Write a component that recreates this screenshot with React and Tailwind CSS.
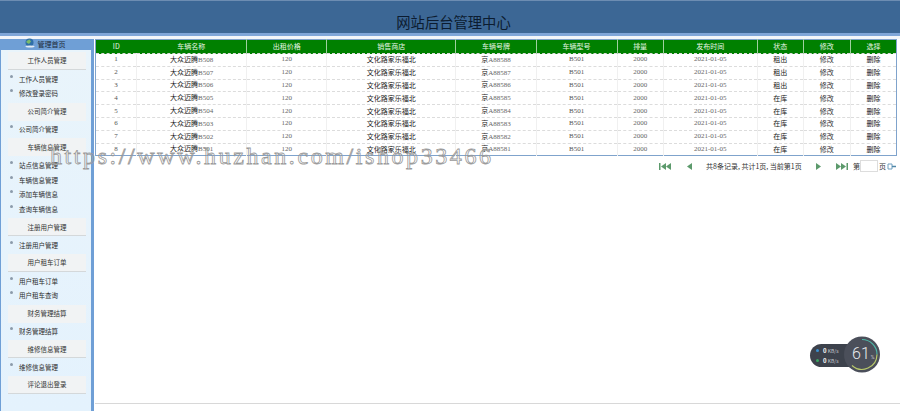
const cols = [41, 110, 80, 129, 80, 81, 46, 94, 46, 47, 46]
const heads = ['ID', '车辆名称', '出租价格', '销售商店', '车辆号牌', '车辆型号', '排量', '发布时间', '状态', '修改', '选择']

const rows = [8, 7, 6, 5, 4, 3, 2, 1].map((n, i) => ({
  id: i + 1,
  name: 'B50' + n,
  plate: 'A8858' + n,
  status: i < 3 ? '租出' : '在库',
}))

const menu = [
  { title: '工作人员管理', line: true, items: ['工作人员管理', '修改登录密码'] },
  { title: '公司简介管理', items: ['公司简介管理'] },
  { title: '车辆信息管理', items: ['站点信息管理', '车辆信息管理', '添加车辆信息', '查询车辆信息'] },
  { title: '注册用户管理', line: true, items: ['注册用户管理'] },
  { title: '用户租车订单', line: true, items: ['用户租车订单', '用户租车查询'] },
  { title: '财务管理结算', items: ['财务管理结算'] },
  { title: '维修信息管理', line: true, items: ['维修信息管理'] },
  { title: '评论退出登录', line: true, items: [] },
]

function Sidebar() {
  return (
    <aside className="flex w-[94px] shrink-0 flex-col border-l border-l-[#6f9fd6] border-r-[3px] border-r-[#6f9fd6]">
      <div className="flex h-[11px] items-center justify-center gap-[3px] bg-[#6f9fd6] pr-[3px]">
        <svg width="11" height="10" viewBox="0 0 11 10" className="-mt-[4px]">
          <circle cx="5.5" cy="4.5" r="4" fill="#2f6fa8" />
          <path d="M2.5 3 5.5 1.5 7 3.5 5 6 2.5 4.500z" fill="#7dbb6a" />
          <ellipse cx="6" cy="8.500" rx="4.500" ry="1" fill="#e4ecf4" />
        </svg>
        <span className="text-[7px] leading-none text-[#1d2a3a]">管理首页</span>
      </div>
      <nav className="flex-1 bg-gradient-to-b from-[#e9f4fb] to-[#e4f2fd] pt-[2px]">
        {menu.map((group) => (
          <div key={group.title}>
            <div
              className={
                'ml-[7px] mr-[5px] flex h-[18px] items-center justify-center bg-[#f1f3f4] text-[6.5px] leading-none text-[#333] ' +
                (group.line ? 'border-b border-[#d4d8da]' : '')
              }
            >
              {group.title}
            </div>
            {group.items.length > 0 && (
              <ul className="py-[1.5px]">
                {group.items.map((item) => (
                  <li key={item} className="relative flex h-[14.75px] items-center pl-[18px] text-[6.5px] leading-none text-[#2c2c2c]">
                    <span className="absolute left-[9px] top-[3px] h-[3px] w-[3px] rounded-full bg-[#8c9bab]" />
                    {item}
                  </li>
                ))}
              </ul>
            )}
          </div>
        ))}
      </nav>
    </aside>
  )
}

function DataTable() {
  return (
    <table className="w-[802px] table-fixed border-collapse border border-[#7fa3cc] text-center text-[7px] leading-none text-[#333]">
      <colgroup>
        {cols.map((w, i) => (
          <col key={i} style={{ width: w }} />
        ))}
      </colgroup>
      <thead>
        <tr className="h-[14px] bg-[#008000] text-[#e6f5e6]">
          {heads.map((h, i) => (
            <th key={h} className={'p-0 font-normal ' + (i > 1 ? 'border-l border-[#9fd09f]' : '')}>
              {h}
            </th>
          ))}
        </tr>
      </thead>
      <tbody>
        {rows.map((r) => (
          <tr key={r.id} className="h-[12.8px] border-t border-dashed border-[#dcdcdc]">
            <td className="p-0 font-['Liberation_Serif'] text-[#555]">{r.id}</td>
            <td className="border-l border-[#f0f0f0] p-0 text-[#222]">
              大众迈腾<span className="font-['Liberation_Serif'] text-[#666]">{r.name}</span>
            </td>
            <td className="border-l border-[#f0f0f0] p-0 font-['Liberation_Serif'] text-[#666]">120</td>
            <td className="border-l border-[#f0f0f0] p-0 text-[#222]">文化路家乐福北</td>
            <td className="border-l border-[#f0f0f0] p-0 text-[#222]">
              京<span className="font-['Liberation_Serif'] text-[#666]">{r.plate}</span>
            </td>
            <td className="border-l border-[#f0f0f0] p-0 font-['Liberation_Serif'] text-[#555]">B501</td>
            <td className="border-l border-[#f0f0f0] p-0 font-['Liberation_Serif'] text-[#666]">2000</td>
            <td className="border-l border-[#f0f0f0] p-0 font-['Liberation_Serif'] text-[#666]">2021-01-05</td>
            <td className="border-l border-[#f0f0f0] p-0 text-[#222]">{r.status}</td>
            <td className="border-l border-[#f0f0f0] p-0 text-[#333]">修改</td>
            <td className="border-l border-[#f0f0f0] p-0 text-[#111]">删除</td>
          </tr>
        ))}
      </tbody>
    </table>
  )
}

function Arrow({ dir, double }) {
  const w = double ? 12 : 6
  const flip = dir === 'left' ? `scale(-1 1) translate(-${w} 0)` : undefined
  return (
    <svg width={w} height="7" viewBox={`0 0 ${w} 7`} className="shrink-0">
      <g transform={flip} fill="#5c9a6c">
        {double ? (
          <>
            <path d="M0 0l5 3.500L0 7z" />
            <path d="M5 0l5 3.500L5 7z" />
            <rect x="10.500" y="0" width="1.500" height="7" />
          </>
        ) : (
          <path d="M0 0l5 3.500L0 7z" />
        )}
      </g>
    </svg>
  )
}

function Pager() {
  return (
    <div className="mt-[4px] flex h-[12px] items-center pl-[564px] text-[7px] leading-none text-[#333]">
      <Arrow dir="left" double />
      <span className="w-[15px] shrink-0" />
      <Arrow dir="left" />
      <span className="ml-[14px] w-[97px] shrink-0 whitespace-nowrap">共8条记录, 共计1页, 当前第1页</span>
      <span className="w-[13px] shrink-0" />
      <Arrow dir="right" />
      <span className="w-[14px] shrink-0" />
      <Arrow dir="right" double />
      <span className="ml-[5px] shrink-0">第</span>
      <span className="h-[12px] w-[18px] shrink-0 border border-[#ddd] bg-white" />
      <span className="ml-px shrink-0">页</span>
      <svg width="9" height="7" viewBox="0 0 9 7" className="ml-px shrink-0">
        <path d="M1 1h4v5H1z" fill="none" stroke="#6f9fc0" />
        <path d="M5 3.500h4" stroke="#4f87a8" strokeWidth="1.500" />
      </svg>
    </div>
  )
}

function NetWidget() {
  return (
    <div className="absolute left-[810px] top-[336px] h-[37px] w-[70px]">
      <div className="absolute left-0 top-[8px] flex h-[23px] w-[50px] flex-col justify-center gap-[4px] rounded-l-full bg-[#3d424c] pl-[6px] text-[5px] leading-none text-[#c8ccd2]">
        <div className="flex items-center gap-[4px]">
          <span className="h-[3px] w-[3px] rounded-full bg-[#3a8fd0]" />
          <span><b className="text-[6px] text-white">0</b> KB/s</span>
        </div>
        <div className="flex items-center gap-[4px]">
          <span className="h-[3px] w-[3px] rounded-full bg-[#3aa860]" />
          <span><b className="text-[6px] text-white">0</b> KB/s</span>
        </div>
      </div>
      <svg width="36" height="37" viewBox="0 0 36 37" className="absolute left-[34px] top-0">
        <circle cx="18" cy="18.500" r="18" fill="#4b4f5a" />
        <path d="M18 3.500a15 15 0 0 1 15 15" fill="none" stroke="#4fb8a8" strokeWidth="1.200" />
        <path d="M33 18.500a15 15 0 0 1-25 11" fill="none" stroke="#b8c86a" strokeWidth="1.200" />
      </svg>
      <div className="absolute left-[42px] top-[10px] flex items-baseline font-['Roboto'] text-[16px] font-light leading-none text-[#e8eaed]">
        61<span className="ml-px text-[5px]">%</span>
      </div>
    </div>
  )
}

export default function App() {
  return (
    <div className="relative flex h-[411px] w-[900px] flex-col overflow-hidden bg-white font-['Noto_Sans_CJK_SC',sans-serif]">
      <header className="flex h-[33px] items-end justify-center border-t border-[#6d8db2] bg-[#3c6795] pb-[1px] pl-[7px] text-[14.300px] leading-[20px] text-[#0c1c30]">
        网站后台管理中心
      </header>
      <div className="h-[3px] bg-[#7fa6d8]" />
      <div className="h-[3px] bg-[#f2f5f9]" />
      <div className="flex min-h-0 flex-1">
        <Sidebar />
        <main className="flex min-w-0 flex-1 flex-col pl-px">
          <DataTable />
          <Pager />
          <div className="mt-auto mb-[7px] h-px bg-[#d8d8d8]" />
        </main>
      </div>
      <div className="pointer-events-none absolute left-[50px] top-[142px] whitespace-nowrap font-['Liberation_Serif'] text-[24px] leading-[28px] tracking-[2.580px] text-transparent [-webkit-text-stroke:0.8px_#9a9a9a]">
        https://www.huzhan.com/ishop33466
      </div>
      <NetWidget />
    </div>
  )
}
